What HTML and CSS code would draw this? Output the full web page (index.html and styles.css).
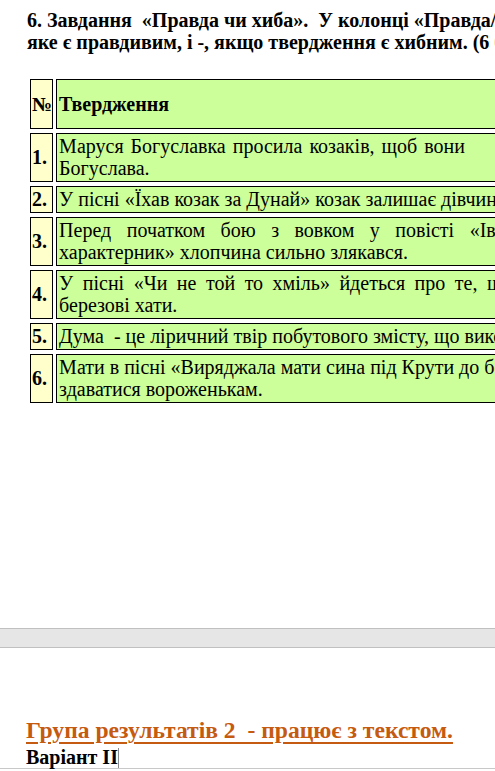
FILE: index.html
```html
<!DOCTYPE html>
<html lang="uk">
<head>
<meta charset="utf-8">
<title>Завдання</title>
<link rel="stylesheet" href="styles.css">
</head>
<body>
<div class="page page-one">
  <p class="task">
    <span class="ln">6. Завдання &nbsp;«Правда чи хиба». &nbsp;У колонці «Правда/Хиба» поставте +, навпроти твердження,</span>
    <span class="ln">яке є правдивим, і -, якщо твердження є хибним. (6 балів)</span>
  </p>
  <table class="quiz">
    <tr class="head">
      <td class="num">№</td>
      <td class="stmt"><b>Твердження</b></td>
      <td class="mark"><b>Правда/<br>Хиба</b></td>
    </tr>
    <tr>
      <td class="num">1.</td>
      <td class="stmt"><span class="ln ws1">Маруся Богуславка просила козаків, щоб вони</span><span class="ln">Богуслава.</span></td>
      <td class="mark"></td>
    </tr>
    <tr>
      <td class="num">2.</td>
      <td class="stmt"><span class="ln">У пісні «Їхав козак за Дунай» козак залишає дівчину, бо йде на війну.</span></td>
      <td class="mark"></td>
    </tr>
    <tr>
      <td class="num">3.</td>
      <td class="stmt"><span class="ln ws3">Перед початком бою з вовком у повісті «Іван Сірко –</span><span class="ln">характерник» хлопчина сильно злякався.</span></td>
      <td class="mark"></td>
    </tr>
    <tr>
      <td class="num">4.</td>
      <td class="stmt"><span class="ln ws4">У пісні «Чи не той то хміль» йдеться про те, що козаки палили</span><span class="ln">березові хати.</span></td>
      <td class="mark"></td>
    </tr>
    <tr>
      <td class="num">5.</td>
      <td class="stmt"><span class="ln">Дума &nbsp;- це ліричний твір побутового змісту, що виконується кобзарями.</span></td>
      <td class="mark"></td>
    </tr>
    <tr>
      <td class="num">6.</td>
      <td class="stmt"><span class="ln">Мати в пісні «Виряджала мати сина під Крути до бою» наказує йому не</span><span class="ln">здаватися вороженькам.</span></td>
      <td class="mark"></td>
    </tr>
  </table>
</div>
<div class="page-gap"></div>
<div class="page page-two">
  <h2 class="group">Група результатів 2 &nbsp;- працює з текстом.</h2>
  <p class="variant">Варіант ІІ<span class="caret"></span></p>
</div>
</body>
</html>
```

FILE: styles.css
```css
html, body {
  margin: 0;
  padding: 0;
  overflow: hidden;
  background: #ffffff;
}

body {
  width: 495px;
  height: 771px;
  font-family: "Liberation Serif", "Times New Roman", serif;
  font-size: 20px;
  color: #000000;
}

.page-one {
  height: 628px;
  padding: 9px 0 0 27px;
  box-sizing: border-box;
}

.ln {
  display: block;
  white-space: nowrap;
}

.task {
  margin: 0;
  font-weight: bold;
  line-height: 22px;
}

.quiz {
  margin: 22px 0 0 0;
  border-collapse: separate;
  border-spacing: 3px 4px;
  line-height: 22px;
}

.quiz td {
  border: 1px solid #000000;
  padding: 1px 2px 2px 2px;
  vertical-align: middle;
  box-sizing: border-box;
}

.quiz .head td {
  height: 50px;
}

.quiz td.num {
  width: 24px;
  padding-left: 1px;
  padding-right: 0;
  background: #ffffcc;
  font-weight: bold;
}

.quiz td.stmt {
  width: 700px;
  background: #ccff99;
}

.quiz td.mark {
  width: 90px;
  background: #ffffcc;
}

.ws1 { word-spacing: 2px; }
.ws3 { word-spacing: 10.5px; }
.ws4 { word-spacing: 4.5px; }

.page-gap {
  height: 18px;
  background: #e6e6e6;
  border-top: 1px solid #c0c0c0;
  border-bottom: 1px solid #c0c0c0;
}

.page-two {
  padding: 68px 0 0 26px;
  height: 121px;
  border-bottom: 1px solid #c8c8c8;
  box-sizing: border-box;
}

.group {
  margin: 0;
  font-size: 23.6px;
  line-height: 28px;
  font-weight: bold;
  color: #c55a11;
  text-decoration: underline;
  text-decoration-thickness: 2px;
  text-underline-offset: 4px;
}

.variant {
  margin: 3px 0 0 0;
  font-weight: bold;
  line-height: 21px;
}

.caret {
  display: inline-block;
  width: 0;
  height: 20px;
  border-left: 1px solid #8a8a8a;
  vertical-align: -4px;
}
```
